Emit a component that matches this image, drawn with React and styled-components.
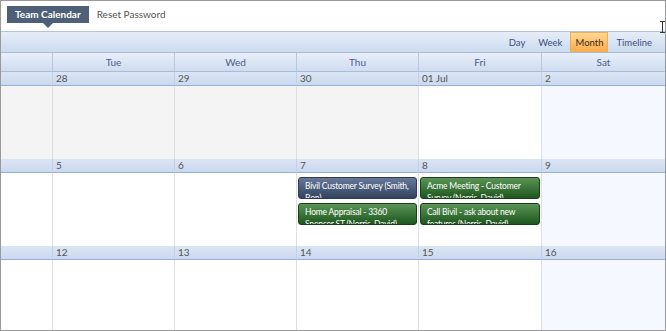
import styled, { createGlobalStyle } from "styled-components";

const GlobalStyle = createGlobalStyle`
  html, body { margin: 0; padding: 0; background: #fff; }
  body { font-family: Lato, "Open Sans", sans-serif; }
  * { box-sizing: border-box; }
`;

const days = ["", "Tue", "Wed", "Thu", "Fri", "Sat"];

const weeks = [
  {
    dates: ["", "28", "29", "30", "01 Jul", "2"],
    kinds: ["other", "other", "other", "other", "day", "weekend"],
    height: 87,
  },
  {
    dates: ["", "5", "6", "7", "8", "9"],
    kinds: ["day", "day", "day", "day", "day", "weekend"],
    height: 87,
    events: {
      3: [
        { tone: "blue", text: "Bivil Customer Survey (Smith, Bon)" },
        { tone: "green", text: "Home Appraisal - 3360 Spencer ST (Norris, David)" },
      ],
      4: [
        { tone: "green", text: "Acme Meeting - Customer Survey (Norris, David)" },
        { tone: "green", text: "Call Bivil - ask about new features (Norris, David)" },
      ],
    },
  },
  {
    dates: ["", "12", "13", "14", "15", "16"],
    kinds: ["day", "day", "day", "day", "day", "weekend"],
    height: 0,
  },
];

function App() {
  return (
    <>
      <GlobalStyle />
      <Frame>
        <TopNav>
          <NavTab $active>Team Calendar</NavTab>
          <NavTab>Reset Password</NavTab>
          <Cursor width="5" height="12" viewBox="0 0 5 12">
            <path d="M0 0.5h5M0 11.5h5M2.5 0.5v11" stroke="#333" strokeWidth="1" fill="none" />
          </Cursor>
        </TopNav>
        <Toolbar>
          <ViewButton>Day</ViewButton>
          <ViewButton>Week</ViewButton>
          <ViewButton $active>Month</ViewButton>
          <ViewButton>Timeline</ViewButton>
        </Toolbar>
        <Columns>
          {days.map((d, i) => (
            <DayName key={i} $first={i === 0}>{d}</DayName>
          ))}
        </Columns>
        {weeks.map((w, wi) => (
          <Week key={wi} $height={w.height}>
            <Columns>
              {w.dates.map((d, i) => (
                <DateCell key={i} $first={i === 0}>{d}</DateCell>
              ))}
            </Columns>
            <CellRow>
              {w.kinds.map((k, i) => (
                <DayCell key={i} $kind={k} $first={i === 0}>
                  {w.events && w.events[i] &&
                    w.events[i].map((e, ei) => (
                      <Event key={ei} $tone={e.tone}>{e.text}</Event>
                    ))}
                </DayCell>
              ))}
            </CellRow>
          </Week>
        ))}
      </Frame>
    </>
  );
}

/* outer frame */
const Frame = styled.div`
  width: 666px;
  height: 331px;
  border: 1px solid #9a9a9a;
  display: flex;
  flex-direction: column;
  overflow: hidden;
`;

/* top navigation */
const TopNav = styled.div`
  position: relative;
  height: 30px;
  display: flex;
  align-items: flex-start;
  padding: 5px 0 0 6px;
`;

const NavTab = styled.div`
  position: relative;
  height: 17px;
  line-height: 17px;
  padding: 0 8px;
  font-size: 10px;
  font-weight: ${(p) => (p.$active ? 700 : 400)};
  color: ${(p) => (p.$active ? "#fff" : "#555")};
  background: ${(p) => (p.$active ? "#4e5f78" : "transparent")};

  &::after {
    content: "";
    display: ${(p) => (p.$active ? "block" : "none")};
    position: absolute;
    left: 50%;
    bottom: -5px;
    margin-left: -5px;
    border-left: 5px solid transparent;
    border-right: 5px solid transparent;
    border-top: 5px solid #4e5f78;
  }
`;

const Cursor = styled.svg`
  position: absolute;
  right: 0;
  top: 20px;
`;

/* view switch toolbar */
const Toolbar = styled.div`
  height: 22px;
  display: flex;
  justify-content: flex-end;
  align-items: stretch;
  gap: 3px;
  padding: 0 8px 0 0;
  background: linear-gradient(#e6edf8, #ccdbef);
  border-top: 1px solid #b3c4dc;
  border-bottom: 1px solid #a9bcd8;
`;

const ViewButton = styled.div`
  display: flex;
  align-items: center;
  padding: 0 4px;
  font-size: 9.5px;
  color: ${(p) => (p.$active ? "#3b2a10" : "#3c4f7d")};
  border: 1px solid ${(p) => (p.$active ? "#e7b252" : "transparent")};
  background: ${(p) => (p.$active ? "linear-gradient(#ffd795, #ffac4e)" : "transparent")};
`;

/* column grid */
const grid = "51px 122px 122px 122px 123px 1fr";

const Columns = styled.div`
  display: grid;
  grid-template-columns: ${grid};
`;

const DayName = styled.div`
  height: 19px;
  line-height: 18px;
  text-align: center;
  font-size: 10px;
  color: #4c5d8c;
  background: linear-gradient(#e8eff9, #cfdcf0);
  border-left: ${(p) => (p.$first ? "none" : "1px solid #b8c8df")};
  border-bottom: 1px solid #a9bcd8;
`;

/* week rows */
const Week = styled.div`
  display: flex;
  flex-direction: column;
  height: ${(p) => (p.$height ? `${p.$height}px` : "auto")};
  flex: ${(p) => (p.$height ? "none" : "1")};
`;

const DateCell = styled.div`
  height: 14px;
  line-height: 13px;
  padding-left: 3px;
  font-size: 10px;
  color: #555;
  background: linear-gradient(#dbe5f4, #cbd9ee);
  border-left: ${(p) => (p.$first ? "none" : "1px solid #c3d1e6")};
  border-bottom: 1px solid #98aedb;
`;

const CellRow = styled.div`
  flex: 1;
  display: grid;
  grid-template-columns: ${grid};
`;

const cellBg = { other: "#f4f4f4", day: "#ffffff", weekend: "#f5f9ff" };

const DayCell = styled.div`
  display: flex;
  flex-direction: column;
  gap: 4px;
  padding: 4px 1px 0 1px;
  background: ${(p) => (p.$first ? (p.$kind === "other" ? "#f4f4f4" : "#fff") : cellBg[p.$kind])};
  border-left: ${(p) => (p.$first ? "none" : "1px solid #dcdfe4")};
`;

const eventTone = {
  blue: { bg: "linear-gradient(#66779a, #34445f)", border: "#2d3a52" },
  green: { bg: "linear-gradient(#5a9456, #1e561e)", border: "#1b3d1b" },
};

const Event = styled.div`
  height: 22px;
  overflow: hidden;
  padding: 2px 2px 0 6px;
  font-size: 8.5px;
  line-height: 12px;
  letter-spacing: -0.2px;
  color: #fff;
  border-radius: 3px;
  background: ${(p) => eventTone[p.$tone].bg};
  border: 1px solid ${(p) => eventTone[p.$tone].border};
`;

export default App;
